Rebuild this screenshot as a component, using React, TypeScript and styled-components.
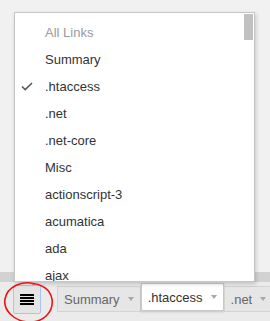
import React from "react"
import styled, { createGlobalStyle } from "styled-components"

const GlobalStyle = createGlobalStyle`
    html, body {
        margin: 0;
        padding: 0;
        background: #f1f1f1;
        font-family: "Liberation Sans", Arial, sans-serif;
    }
`

const Page = styled.div`
    position: relative;
    width: 270px;
    height: 321px;
    display: flex;
    flex-direction: column;
    overflow: hidden;
    background: #f1f1f1;
`

const Content = styled.div`
    flex: 1;
`

const Strip = styled.div`
    height: 10px;
    flex-shrink: 0;
    background: #d2d2d2;
`

const TabBar = styled.div`
    height: 39px;
    flex-shrink: 0;
    background: #ebebeb;
    display: flex;
    align-items: flex-start;
    padding-left: 13px;
    overflow: hidden;
`

const MenuButton = styled.div`
    box-sizing: border-box;
    flex-shrink: 0;
    width: 28px;
    height: 29px;
    margin-top: 3px;
    margin-right: 16px;
    border: 1px solid #a9c4ee;
    border-radius: 2px;
    background: #e4e4e4;
    display: flex;
    flex-direction: column;
    align-items: center;
    justify-content: center;
    gap: 1px;
`

const Bar = styled.span`
    display: block;
    width: 14px;
    height: 2px;
    background: #000;
`

const Tab = styled.div<{ active?: boolean }>`
    box-sizing: border-box;
    height: ${({ active }) => (active ? "28px" : "26px")};
    margin-top: ${({ active }) => (active ? "1px" : "4px")};
    padding: 0 6px 0 6px;
    display: flex;
    align-items: center;
    gap: 8px;
    background: ${({ active }) => (active ? "#fff" : "#e6e6e6")};
    border: 1px solid ${({ active }) => (active ? "#c9c9c9" : "#d3d3d3")};
    box-shadow: ${({ active }) => (active ? "0 1px 2px rgba(0,0,0,0.18)" : "none")};
    color: ${({ active }) => (active ? "#333" : "#666")};
    font-size: 13px;
    white-space: nowrap;
    flex-shrink: 0;
`

const Caret = styled.span`
    width: 0;
    height: 0;
    border-left: 3.5px solid transparent;
    border-right: 3.5px solid transparent;
    border-top: 4px solid #a8a8a8;
`

const Menu = styled.div`
    position: absolute;
    left: 14px;
    top: 12px;
    width: 241px;
    height: 270px;
    box-sizing: border-box;
    background: #fff;
    border: 1px solid #c6c6c6;
    box-shadow: 1px 2px 4px rgba(0, 0, 0, 0.18);
    display: flex;
    overflow: hidden;
    z-index: 10;
`

const List = styled.div`
    flex: 1;
    padding-top: 6px;
`

const Item = styled.div<{ muted?: boolean }>`
    position: relative;
    height: 27px;
    line-height: 27px;
    padding-left: 30px;
    font-size: 13px;
    color: ${({ muted }) => (muted ? "#9a9a9a" : "#333")};
    white-space: nowrap;
`

const Check = styled.svg`
    position: absolute;
    left: 6px;
    top: 9px;
`

const Track = styled.div`
    width: 11px;
    padding: 1px 1px 0 0;
    box-sizing: border-box;
`

const Thumb = styled.div`
    width: 9px;
    height: 26px;
    background: #c1c1c1;
    margin-left: 1px;
`

const Annotation = styled.svg`
    position: absolute;
    left: 0;
    top: 278px;
    pointer-events: none;
    z-index: 20;
`

const items = [
    ".net",
    ".net-core",
    "Misc",
    "actionscript-3",
    "acumatica",
    "ada",
    "ajax",
    "ajax-forms",
]

export default function App() {
    return (
        <>
            <GlobalStyle />
            <Page>
                <Content />
                <Strip />
                <TabBar>
                    <MenuButton>
                        <Bar />
                        <Bar />
                        <Bar />
                        <Bar />
                    </MenuButton>
                    <Tab>
                        Summary <Caret />
                    </Tab>
                    <Tab active>
                        .htaccess <Caret />
                    </Tab>
                    <Tab>
                        .net <Caret />
                    </Tab>
                </TabBar>

                <Menu>
                    <List>
                        <Item muted>All Links</Item>
                        <Item>Summary</Item>
                        <Item>
                            <Check width="12" height="9" viewBox="0 0 12 9">
                                <path d="M1 4.5 L4.2 7.6 L11 1" fill="none" stroke="#555" strokeWidth="1.5" />
                            </Check>
                            .htaccess
                        </Item>
                        {items.map(name => (
                            <Item key={name}>{name}</Item>
                        ))}
                    </List>
                    <Track>
                        <Thumb />
                    </Track>
                </Menu>

                <Annotation width="60" height="43" viewBox="0 278 60 43">
                    <path
                        d="M34 284 C 22 280, 7 287, 5 299 C 3 310, 14 321, 28 322 C 43 323, 54 312, 52 299 C 50 289, 41 284, 30 283"
                        fill="none"
                        stroke="#ee1111"
                        strokeWidth="1.6"
                        strokeLinecap="round"
                    />
                </Annotation>
            </Page>
        </>
    )
}
